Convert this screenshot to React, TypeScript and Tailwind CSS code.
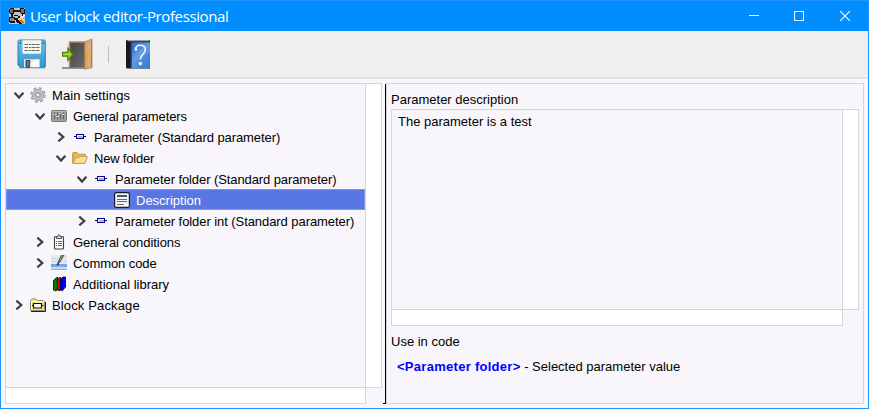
import { useState } from "react";
import type { ReactNode } from "react";

type TreeItem = {
  id: string;
  label: string;
  indent: string;
  tracking: string;
  icon: ReactNode;
  state: "open" | "closed" | "leaf";
};

function AppIcon() {
  return (
    <svg width="16" height="16" viewBox="0 0 16 16" shapeRendering="crispEdges">
      <rect width="16" height="16" fill="#c3c3c3" />
      <path d="M1 0h4v1h-4zM1 5h4v1h-4zM11 0h4v1h-4zM12 5h4v1h-4zM5 2h6v2h-6zM0 1h1v4h-1zM15 1h1v4h-1zM4 1h1v4h-1zM11 1h1v4h-1z" fill="#151515" />
      <path d="M2 6h2v3h-2zM5 7h4v1h-4zM13 6h1v2h-1zM0 9h6v1h-6zM1 13h5v2h-5zM5 10h4v2h-4zM0 10h1v4h-1zM9 8h2v2h-2z" fill="#151515" />
      <path d="M1 1h3v4h-3zM12 1h3v4h-3z" fill="#6f6f6f" />
      <path d="M1 10h4v3h-4z" fill="#8b8b8b" />
      <path d="M7 12h3v1h1v1h1v1h1v1h-3v-1h-2v-1h-1z" fill="#151515" />
      <path d="M14 7h2v1h-1v1h-1v1h-2v1h-1v1h-1v-2h1v-1h1v-1h2z" fill="#fff" />
      <path d="M10 10h3v1h1v1h1v1h1v2h-2v-1h-1v-1h-1v-1h-2z" fill="#ffd83d" />
      <path d="M11 12h2v1h1v1h1v1h-2v-1h-1v-1h-1z" fill="#e23b12" />
    </svg>
  );
}

function SaveIcon() {
  return (
    <svg width="29" height="30" viewBox="0 0 29 30">
      <defs>
        <linearGradient id="disk" x1="0" y1="0" x2="0" y2="1">
          <stop offset="0" stopColor="#6fc0e6" />
          <stop offset="1" stopColor="#2c97d6" />
        </linearGradient>
      </defs>
      <path d="M1.500 29h27" stroke="#c2c2c2" strokeWidth="1.4" />
      <path d="M2.500 1h24.500q1.300 0 1.300 1.300v24.700q0 1.300-1.300 1.300H3.500L1 26V2.500Q1 1 2.500 1z" fill="url(#disk)" stroke="#1f76ac" strokeWidth=".9" />
      <path d="M5.500 1.300h18.500v12q0 1.500-1.500 1.500H7q-1.500 0-1.500-1.500z" fill="#f6f6f1" />
      <path d="M7.500 5.500h15M7.500 8.500h15M7.500 11.500h15" stroke="#55585a" strokeWidth=".9" strokeDasharray="3.500 .8 2 .7 4 .6" />
      <path d="M2.800 3h1.200v2H2.800zM25.500 3h1.200v2h-1.200z" fill="#135e98" />
      <path d="M7 20h15.500v8.300H7z" fill="#ebeae8" />
      <path d="M7 20h15.500" stroke="#999" strokeWidth=".7" />
      <path d="M9 21.500h3.800v6.800H9z" fill="#4d7ca3" stroke="#3d3d3d" strokeWidth="1" />
      <path d="M13.500 24l5-3.500h3.800v7.600h-8.800z" fill="#fafafa" />
    </svg>
  );
}

function ExitIcon() {
  return (
    <svg width="32" height="32" viewBox="0 0 32 32">
      <defs>
        <linearGradient id="door" x1="0" y1="0" x2="1" y2="0">
          <stop offset="0" stopColor="#c99a65" />
          <stop offset=".75" stopColor="#e0b988" />
          <stop offset="1" stopColor="#a97443" />
        </linearGradient>
        <linearGradient id="room" x1="0" y1="0" x2="1" y2="1">
          <stop offset="0" stopColor="#444" />
          <stop offset="1" stopColor="#6a6a6a" />
        </linearGradient>
      </defs>
      <path d="M1 30h23" stroke="#555" strokeWidth="1.2" />
      <path d="M8.500 29.500V4h15.500v25.500z" fill="url(#room)" />
      <path d="M8.500 29.500V4H24" fill="none" stroke="#bd8a55" strokeWidth="1.600" />
      <path d="M23.500 4L31 1V29.800l-7.500 1.400z" fill="url(#door)" stroke="#a87240" strokeWidth=".7" />
      <path d="M25.300 6l3.800-1.500v8.500l-3.800 1zM25.300 18.500l3.800-.5v9l-3.800 1z" fill="none" stroke="#d0a272" strokeWidth=".7" />
      <path d="M29 14h-1.800v4H29" fill="none" stroke="#f1a900" strokeWidth="1.2" />
      <path d="M1.600 14.300h5.200V10.200l5 6.100-5 6v-4.100H1.600z" fill="#99d51c" stroke="#4b820f" strokeWidth="1.2" />
    </svg>
  );
}

function HelpIcon() {
  return (
    <svg width="26" height="32" viewBox="0 0 26 32">
      <defs>
        <linearGradient id="cover" x1="0" y1="0" x2="1" y2="1">
          <stop offset="0" stopColor="#356abb" />
          <stop offset=".45" stopColor="#5d97e2" />
          <stop offset="1" stopColor="#3474cd" />
        </linearGradient>
      </defs>
      <path d="M1.500 2h23.500v28.500H1.500L1 29V3z" fill="#15181d" />
      <path d="M2.500 2.700h22" stroke="#aab3bf" strokeWidth="1.2" />
      <path d="M6.500 4.300H25V30.300H6.500z" fill="url(#cover)" />
      <path d="M6 4v26.500" stroke="#284f82" strokeWidth="1" />
      <path d="M7 18L25 5v9L7 26z" fill="#8bb8ec" opacity=".2" />
      <path d="M10.500 11.500c.2-2.700 2-4.200 4.800-4.200 3 0 5 1.900 5 4.600 0 4-5 4.700-5 9.600" fill="none" stroke="#eef6ff" strokeWidth="1.600" />
      <circle cx="11" cy="11.500" r="1.300" fill="#eef6ff" />
      <circle cx="15.300" cy="25.500" r="1.800" fill="#eef6ff" />
    </svg>
  );
}

function GearIcon() {
  return (
    <svg width="16" height="16" viewBox="0 0 16 16">
      <circle cx="8" cy="8" r="6.300" fill="none" stroke="#858585" strokeWidth="2.800" strokeDasharray="2.700 2.248" />
      <circle cx="8" cy="8" r="5.400" fill="#cacaca" stroke="#8c8c8c" strokeWidth=".8" />
      <circle cx="8" cy="8" r="6.100" fill="none" stroke="#cacaca" strokeWidth="2" strokeDasharray="1.500 3.291" strokeDashoffset="-.6" />
      <circle cx="8" cy="8" r="3.200" fill="none" stroke="#acacac" />
      <circle cx="8" cy="8" r="2" fill="#f8f6fa" stroke="#8b8b8b" strokeWidth=".9" />
    </svg>
  );
}

function MixerIcon() {
  return (
    <svg width="16" height="16" viewBox="0 0 16 16">
      <rect x=".5" y="2.500" width="15" height="11" rx="1" fill="#a0a0a0" stroke="#777" />
      <path d="M1.500 3.500h13" stroke="#bdbdbd" />
      <path d="M3.500 4.500v7M6.500 4.500v7M9.500 4.500v7M12.500 4.500v7" stroke="#5f5f5f" />
      <path d="M3 6.500h1M5.500 8.500h2M9 5.500h1M12 6.500h1" stroke="#f4f4f4" />
    </svg>
  );
}

function ParamIcon() {
  return (
    <svg width="16" height="16" viewBox="0 0 16 16" shapeRendering="crispEdges">
      <path d="M2 7h12v1H2z" fill="#000080" />
      <path d="M4 5h8v5H4z" fill="#000080" />
      <path d="M5 6h6v3H5z" fill="#f3f3f8" />
      <path d="M6 7h5v2H6z" fill="#b5b5b5" />
    </svg>
  );
}

function FolderIcon() {
  return (
    <svg width="16" height="16" viewBox="0 0 16 16">
      <path d="M.6 13V3.500q0-1 1-1H5l1.500 1.700h6.900v3" fill="#e8b64e" stroke="#c99843" />
      <path d="M.8 13.400L3.500 8h3l1.200-1.200h7.800l-2.600 6.600z" fill="#fbdf93" stroke="#cb9a43" />
      <path d="M4.200 9h2.900l1.200-1.200H14" fill="none" stroke="#fff3cd" strokeWidth=".8" />
    </svg>
  );
}

function DescriptionIcon() {
  return (
    <svg width="16" height="16" viewBox="0 0 16 16">
      <rect x=".6" y=".6" width="14.800" height="14.800" rx="1.500" fill="#f4f4f4" stroke="#151b2b" strokeWidth="1.200" />
      <path d="M3 3h10v2H3z" fill="#3d5a80" />
      <path d="M3 7.500h10M3 9.500h10M3 12.500h7" stroke="#6b6b6b" />
    </svg>
  );
}

function ClipboardIcon() {
  return (
    <svg width="16" height="16" viewBox="0 0 16 16">
      <rect x="3.500" y="2.500" width="9" height="12.500" rx="1" fill="#fafafa" stroke="#3d3d3d" strokeWidth="1.100" />
      <path d="M5.500 4.500v-2h1.300Q6.800.8 8 .8t1.200 1.700h1.300v2z" fill="#ddd" stroke="#3d3d3d" strokeWidth=".9" />
      <path d="M5 7.500h1M5 9.500h1M5 11.500h1M7 7.500h4M7 9.500h4M7 11.500h4" stroke="#626262" />
    </svg>
  );
}

function CodeIcon() {
  return (
    <svg width="16" height="16" viewBox="0 0 16 16">
      <path d="M0 0h16v10H0z" fill="#e5e7eb" />
      <path d="M0 3.500h7M0 6.500h6M12 6.500h4" stroke="#d0d4da" />
      <path d="M0 9h16v3H0z" fill="#6da8ec" />
      <path d="M0 12h16v3H0z" fill="#c4d8f2" />
      <path d="M4 11.500h9M0 14.500h16" stroke="#8ab2e2" />
      <path d="M6 10l1-4L10 0h3.500L9.500 7z" fill="#55585e" />
      <path d="M8.500 6l3-5.500" stroke="#a7abb0" strokeWidth=".8" />
      <path d="M5.600 11l.9-3 1.800 1z" fill="#171717" />
    </svg>
  );
}

function LibraryIcon() {
  return (
    <svg width="16" height="16" viewBox="0 0 16 16">
      <path d="M2.500 14V4.500L5.500 1.500h1.500v10L5 15z" fill="#008000" stroke="#000" strokeWidth=".8" />
      <path d="M6.200 14V4.500L8.500 1.500h1.500v10L8.500 14.600z" fill="#ff0000" stroke="#000" strokeWidth=".8" />
      <path d="M9 14V4.500L12 1h2.500v10L11.500 14.600z" fill="#0000f0" stroke="#000" strokeWidth=".8" />
      <path d="M10.500 4.500v8" stroke="#000" strokeWidth=".5" />
    </svg>
  );
}

function PackageIcon() {
  return (
    <svg width="16" height="16" viewBox="0 0 16 16">
      <path d="M.5 13.500V3.500l1.500-1.500h4l1.500 1.500h6l1 1v9z" fill="#f0ea86" stroke="#8b8b6b" />
      <path d="M1 14.500h14.500V5" fill="none" stroke="#222" />
      <path d="M1.500 13V4.500h12.500" fill="none" stroke="#fffde0" />
      <path d="M2 8.500h11.500" stroke="#111" />
      <path d="M3.500 6.500h8v4.500h-8z" fill="#f7f7ef" stroke="#111" strokeWidth="1.200" />
    </svg>
  );
}

function Chevron({ state }: { state: TreeItem["state"] }) {
  if (state === "leaf") return null;
  return (
    <svg width="10" height="10" viewBox="0 0 10 10" fill="none" stroke="#404040" strokeWidth="2.200">
      {state === "open" ? <path d="M.6 2.800L5 7.600l4.400-4.800" /> : <path d="M2.300.6l5 4.400-5 4.400" />}
    </svg>
  );
}

const items: TreeItem[] = [
  { id: "main", label: "Main settings", indent: "pl-[8px]", tracking: "tracking-[0.12px]", icon: <GearIcon />, state: "open" },
  { id: "general", label: "General parameters", indent: "pl-[29px]", tracking: "tracking-[-0.09px]", icon: <MixerIcon />, state: "open" },
  { id: "param", label: "Parameter (Standard parameter)", indent: "pl-[50px]", tracking: "tracking-[-0.08px]", icon: <ParamIcon />, state: "closed" },
  { id: "folder", label: "New folder", indent: "pl-[50px]", tracking: "tracking-[-0.2px]", icon: <FolderIcon />, state: "open" },
  { id: "pfolder", label: "Parameter folder (Standard parameter)", indent: "pl-[71px]", tracking: "tracking-[-0.09px]", icon: <ParamIcon />, state: "open" },
  { id: "description", label: "Description", indent: "pl-[92px]", tracking: "tracking-normal", icon: <DescriptionIcon />, state: "leaf" },
  { id: "pint", label: "Parameter folder int (Standard parameter)", indent: "pl-[71px]", tracking: "tracking-[-0.07px]", icon: <ParamIcon />, state: "closed" },
  { id: "conditions", label: "General conditions", indent: "pl-[29px]", tracking: "tracking-[-0.05px]", icon: <ClipboardIcon />, state: "closed" },
  { id: "code", label: "Common code", indent: "pl-[29px]", tracking: "tracking-[-0.08px]", icon: <CodeIcon />, state: "closed" },
  { id: "library", label: "Additional library", indent: "pl-[29px]", tracking: "tracking-normal", icon: <LibraryIcon />, state: "leaf" },
  { id: "package", label: "Block Package", indent: "pl-[8px]", tracking: "tracking-[0.14px]", icon: <PackageIcon />, state: "closed" },
];

export default function App() {
  const [selected, setSelected] = useState("description");

  return (
    <div className="flex h-[409px] w-[869px] flex-col overflow-hidden border border-[#1e96ff] bg-[#f8f6fa] font-['Liberation_Sans',Arial,sans-serif] text-[13px] leading-[21px] text-black">
      {/* Title bar */}
      <div className="flex h-[30px] shrink-0 items-center bg-[#008eff] pl-2 text-white">
        <AppIcon />
        <h1 className="ml-[5px] flex-1 font-['Open_Sans','Noto_Sans',sans-serif] text-[15px] leading-[28px] tracking-[-0.4px] whitespace-nowrap">
          User block editor-Professional
        </h1>
        <div className="flex">
          <button className="flex h-[30px] w-[45px] items-center justify-center" aria-label="Minimize">
            <svg width="10" height="10" viewBox="0 0 10 10" stroke="white"><path d="M0 4.500h10" /></svg>
          </button>
          <button className="flex h-[30px] w-[46px] items-center justify-center" aria-label="Maximize">
            <svg width="10" height="10" viewBox="0 0 10 10" stroke="white" fill="none"><path d="M.5.5h9v9h-9z" /></svg>
          </button>
          <button className="flex h-[30px] w-[46px] items-center justify-center" aria-label="Close">
            <svg width="10" height="10" viewBox="0 0 10 10" stroke="white" strokeWidth="1.100"><path d="M0 0l10 10M10 0L0 10" /></svg>
          </button>
        </div>
      </div>

      {/* Toolbar */}
      <div className="flex h-[48px] shrink-0 items-center border-b-2 border-[#e3e3e3] bg-[#efefef] pl-4">
        <button aria-label="Save"><SaveIcon /></button>
        <button className="ml-[15px]" aria-label="Exit"><ExitIcon /></button>
        <div className="mt-px ml-[15px] h-[17px] w-px bg-[#bdbdbd]" />
        <button className="ml-[16px]" aria-label="Help"><HelpIcon /></button>
      </div>

      <div className="flex min-h-0 flex-1 p-[4px]">
        {/* Settings tree */}
        <div className="flex w-[377px] shrink-0 flex-col">
          <div className="flex h-[305px] border border-[#d7d5d9]">
            <div className="w-[359px]">
              {items.map((item) => (
                <div
                  key={item.id}
                  onClick={() => setSelected(item.id)}
                  className={`flex h-[21px] items-center border whitespace-nowrap ${item.indent} ${
                    selected === item.id ? "border-[#7894f4] bg-[#5877e5] text-white" : "border-transparent"
                  }`}
                >
                  <span className="-ml-px flex w-[16px] shrink-0 items-center"><Chevron state={item.state} /></span>
                  {item.icon}
                  <span className={`ml-[6px] pt-[2px] leading-[19px] ${item.tracking}`}>{item.label}</span>
                </div>
              ))}
            </div>
            <div className="flex-1 border-l border-[#d7d5d9] bg-white" />
          </div>
          <div className="h-[16px] w-[361px] border border-t-0 border-[#d7d5d9] bg-white" />
        </div>

        {/* Splitter */}
        <div className="flex w-[4px] shrink-0 flex-col items-end pt-px">
          <div className="w-px flex-1 bg-black" />
          <div className="h-px w-[3px] bg-black" />
        </div>

        {/* Parameter details */}
        <div className="flex flex-1 flex-col border border-[#d7d5d9] pl-[4px]">
          <h2 className="mt-[5px] h-[20px]">Parameter description</h2>
          <div className="flex h-[201px] w-[468px] border border-[#d7d5d9]">
            <p className="w-[450px] pt-px pl-[6px]">The parameter is a test</p>
            <div className="flex-1 border-l border-[#d7d5d9] bg-white" />
          </div>
          <div className="h-[16px] w-[452px] border border-t-0 border-[#d7d5d9] bg-white" />
          <h2 className="mt-[5px]">Use in code</h2>
          <p className="mt-[4px] pl-[6px]">
            <b className="tracking-[0.28px] text-[#0000ff]">&lt;Parameter folder&gt;</b> - Selected parameter value
          </p>
        </div>
      </div>
    </div>
  );
}
